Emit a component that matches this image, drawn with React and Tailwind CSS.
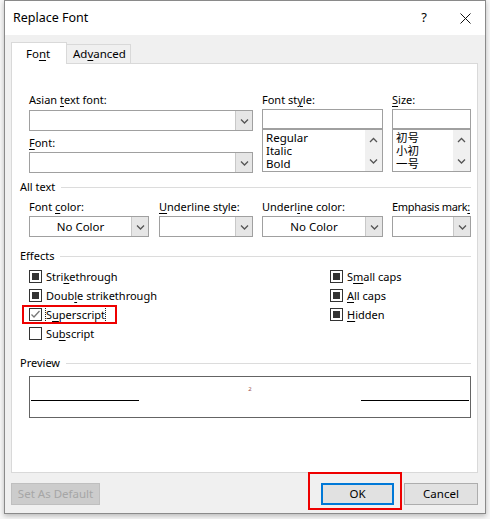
import React from 'react';

const FONT = "font-['Noto_Sans','Noto_Sans_CJK_SC',sans-serif]";

const U = ({ children }) => <span className="underline underline-offset-2">{children}</span>;

const Chevron = ({ up = false, className = '' }) => (
  <svg width="9" height="6" viewBox="0 0 9 6" className={className}>
    <path
      d={up ? 'M1 5 L4.5 1.5 L8 5' : 'M1 1.5 L4.5 5 L8 1.5'}
      fill="none"
      stroke="#555"
      strokeWidth="1.3"
    />
  </svg>
);

const Combo = ({ width, value = '', center = false }) => (
  <div
    className="flex h-[21px] border border-[#a0a0a0] bg-white"
    style={{ width }}
  >
    <div className={`flex-1 flex items-center text-[11.5px] ${center ? 'justify-center' : 'pl-1'}`}>
      {value}
    </div>
    <div className="w-[17px] flex items-center justify-center bg-[#e6e6e6] border-l border-[#c8c8c8]">
      <Chevron />
    </div>
  </div>
);

const ListBox = ({ items, cjk = false }) => (
  <div className="flex h-[43px] border border-[#a0a0a0] bg-white overflow-hidden">
    <div
      className={`flex-1 pt-[1px] pl-[3px] leading-[13px] ${
        cjk ? "font-['Noto_Sans_CJK_SC',sans-serif] text-[11.5px]" : 'text-[11.5px]'
      }`}
    >
      {items.map((t) => (
        <div key={t} className="h-[13px]">{t}</div>
      ))}
    </div>
    <div className="w-[17px] flex flex-col items-center justify-between py-[7px] bg-[#f0f0f0]">
      <Chevron up />
      <Chevron />
    </div>
  </div>
);

const Section = ({ title }) => (
  <div className="flex items-center h-[16px] leading-[16px]">
    <span>{title}</span>
    <div className="flex-1 ml-[6px] h-px bg-[#dcdcdc]" />
  </div>
);

const Check = ({ state, children, focus = false }) => (
  <div className="flex items-center h-[19px]">
    <div className="w-[13px] h-[13px] border border-[#333] bg-white flex items-center justify-center">
      {state === 'mixed' && <div className="w-[7px] h-[7px] bg-[#333]" />}
      {state === 'checked' && (
        <svg width="11" height="11" viewBox="0 0 11 11">
          <path d="M1.5 5.5 L4 8 L9.5 2" fill="none" stroke="#777" strokeWidth="1.3" />
        </svg>
      )}
    </div>
    <span
      className={`ml-[4px] leading-[15px] ${
        focus ? 'outline outline-1 outline-dotted outline-[#222]' : ''
      }`}
    >
      {children}
    </span>
  </div>
);

export default function App() {
  return (
    <div className={`w-[490px] h-[519px] bg-[#f7f7f7] text-black ${FONT}`}>
      <div className="ml-[4px] w-[482px] h-[514px] border border-[#8a8a8a] bg-[#f0f0f0] flex flex-col shadow-[0_2px_5px_rgba(0,0,0,0.25)]">
        {/* Title bar */}
        <div className="h-[34px] bg-white flex items-center pl-[8px] pr-[14px] shrink-0">
          <span className="text-[12.5px]">Replace Font</span>
          <span className="ml-auto text-[13px] mr-[33px]">?</span>
          <svg width="11" height="11" viewBox="0 0 11 11">
            <path d="M0.5 0.5 L10.5 10.5 M10.5 0.5 L0.5 10.5" stroke="#111" strokeWidth="1" />
          </svg>
        </div>

        {/* Body */}
        <div className="flex-1 pl-[6px] pr-[7px] pt-[7px] flex flex-col text-[11px]">
          {/* Tabs */}
          <div className="flex items-end h-[21px] text-[11.5px]">
            <div className="relative z-10 w-[56px] h-[22px] mb-[-1px] bg-white border border-b-0 border-[#d9d9d9] flex items-center pl-[14px]">
              Fo<U>n</U>t
            </div>
            <div className="w-[64px] h-[19px] bg-[#f0f0f0] border border-b-0 border-l-0 border-[#d9d9d9] flex items-center pl-[6px]">
              Ad<U>v</U>anced
            </div>
          </div>

          {/* Panel */}
          <div className="h-[410px] bg-white border border-[#d9d9d9] pl-[8px] pr-[6px]">
            {/* Top row */}
            <div className="flex ml-[9px] mt-[28px] gap-[9px]">
              <div className="w-[224px] flex flex-col">
                <div className="h-[16px] leading-[16px]">Asian <U>t</U>ext font:</div>
                <div className="mt-[2px]"><Combo width={224} /></div>
                <div className="mt-[4px] h-[16px] leading-[16px]"><U>F</U>ont:</div>
                <div className="mt-[1px]"><Combo width={224} /></div>
              </div>
              <div className="w-[121px] flex flex-col">
                <div className="h-[16px] leading-[16px]">Font st<U>y</U>le:</div>
                <div className="mt-[1px] h-[20px] border border-[#a0a0a0] bg-white" />
                <ListBox items={['Regular', 'Italic', 'Bold']} />
              </div>
              <div className="w-[79px] flex flex-col">
                <div className="h-[16px] leading-[16px]"><U>S</U>ize:</div>
                <div className="mt-[1px] h-[20px] border border-[#a0a0a0] bg-white" />
                <ListBox items={['初号', '小初', '一号']} cjk />
              </div>
            </div>

            <div className="mt-[6px]">
              <Section title="All text" />
            </div>

            <div className="flex ml-[9px] mt-[4px]">
              <div className="w-[120px]">
                <div className="h-[16px] leading-[16px]">Font <U>c</U>olor:</div>
                <div className="mt-[1px]"><Combo width={120} value="No Color" center /></div>
              </div>
              <div className="w-[94px] ml-[10px]">
                <div className="h-[16px] leading-[16px]"><U>U</U>nderline style:</div>
                <div className="mt-[1px]"><Combo width={94} /></div>
              </div>
              <div className="w-[121px] ml-[9px]">
                <div className="h-[16px] leading-[16px]">Underl<U>i</U>ne color:</div>
                <div className="mt-[1px]"><Combo width={121} value="No Color" center /></div>
              </div>
              <div className="w-[79px] ml-[9px]">
                <div className="h-[16px] leading-[16px] whitespace-nowrap tracking-[-0.3px]">Emphasis mark<U>:</U></div>
                <div className="mt-[1px]"><Combo width={79} /></div>
              </div>
            </div>

            <div className="mt-[11px]">
              <Section title="Effects" />
            </div>

            <div className="flex ml-[9px] mt-[3px]">
              <div className="w-[301px] flex flex-col">
                <Check state="mixed">Stri<U>k</U>ethrough</Check>
                <Check state="mixed">Doub<U>l</U>e strikethrough</Check>
                <div className="relative">
                  <Check state="checked" focus>S<U>u</U>perscript</Check>
                  <div className="absolute left-[-7px] top-[0px] w-[95px] h-[19px] border-2 border-[#ee0000]" />
                </div>
                <Check state="unchecked">Su<U>b</U>script</Check>
              </div>
              <div className="flex flex-col">
                <Check state="mixed">S<U>m</U>all caps</Check>
                <Check state="mixed"><U>A</U>ll caps</Check>
                <Check state="mixed"><U>H</U>idden</Check>
              </div>
            </div>

            <div className="mt-[12px]">
              <Section title="Preview" />
            </div>

            <div className="ml-[9px] mt-[5px] w-[442px] h-[42px] border border-[#646464] flex justify-between px-[1px]">
              <div className="mt-[23px] w-[108px] h-px bg-black" />
              <div className="mt-[8px] text-[6px] leading-[8px] text-[#a05050]">2</div>
              <div className="mt-[23px] w-[108px] h-px bg-black" />
            </div>
          </div>

          {/* Buttons */}
          <div className="flex mt-[10px] text-[11.5px]">
            <div className="w-[89px] h-[22px] bg-[#cccccc] border border-[#bfbfbf] flex items-center justify-center text-[#a6a6a6]">
              Set As Default
            </div>
            <div className="relative ml-auto">
              <div className="w-[73px] h-[22px] bg-[#e1e1e1] border-2 border-[#0078d7] flex items-center justify-center">
                OK
              </div>
              <div className="absolute left-[-13px] top-[-11px] w-[94px] h-[38px] border-2 border-[#ee0000]" />
            </div>
            <div className="ml-[10px] w-[74px] h-[22px] bg-[#e1e1e1] border border-[#adadad] flex items-center justify-center">
              Cancel
            </div>
          </div>
        </div>
      </div>
    </div>
  );
}
